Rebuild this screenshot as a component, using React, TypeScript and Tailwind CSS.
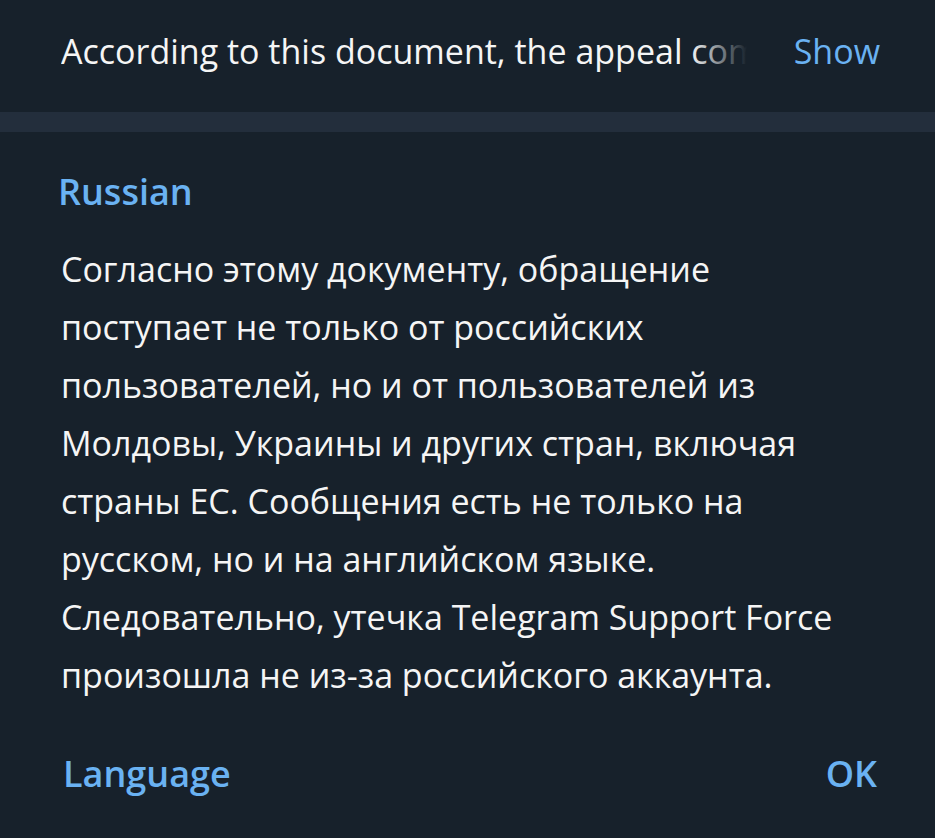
export default function App() {
  return (
    <div
      className="flex h-[838px] w-[935px] flex-col overflow-hidden bg-[#17212b] text-[#f5f5f5]"
      style={{ fontFamily: '"Open Sans", "Noto Sans", sans-serif' }}
    >
      <div className="flex h-[112px] items-center pb-[10px] pl-[61px] pr-[55px]">
        <div className="relative w-[686px] overflow-hidden whitespace-nowrap text-[34px]">
          According to this document, the appeal com
          <div className="absolute inset-y-0 right-0 w-[56px] bg-gradient-to-r from-transparent to-[#17212b]" />
        </div>
        <button className="ml-auto text-[34px] text-[#6ab2f2]">Show</button>
      </div>
      <div className="h-[20px] bg-[#232e3c]" />
      <div className="flex flex-1 flex-col px-[58px] pt-[38px]">
        <div className="text-[36px] font-semibold leading-[44px] text-[#6ab2f2]">Russian</div>
        <p className="mt-[26px] w-[800px] pl-[3px] pr-[10px] text-[34px] leading-[58px]">
          Согласно этому документу, обращение поступает не только от российских
          пользователей, но и от пользователей из Молдовы, Украины и других стран,
          включая страны ЕС. Сообщения есть не только на русском, но и на
          английском языке. Следовательно, утечка Telegram Support Force произошла
          не из-за российского аккаунта.
        </p>
        <div className="mt-auto mb-[37px] flex items-center justify-between pl-[5px]">
          <button className="text-[36px] font-semibold text-[#6ab2f2]">Language</button>
          <button className="text-[36px] font-semibold text-[#6ab2f2]">OK</button>
        </div>
      </div>
    </div>
  );
}
